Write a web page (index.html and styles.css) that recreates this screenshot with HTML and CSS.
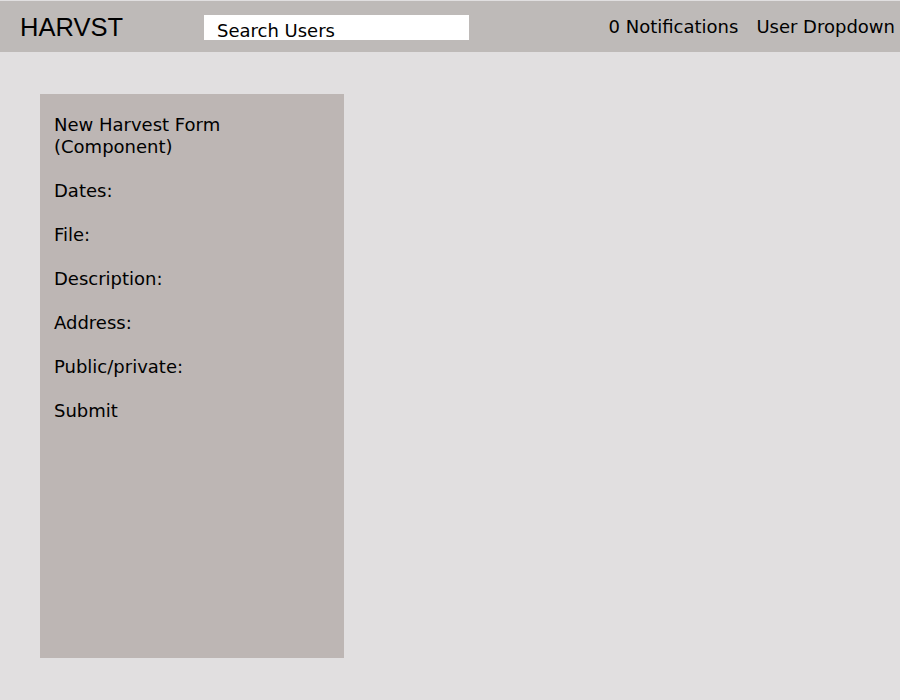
FILE: index.html
```html
<!DOCTYPE html>
<html>
<head>
<meta charset="utf-8">
<link rel="stylesheet" href="styles.css">
</head>
<body>
<header class="topbar">
  <div class="logo">HARVST</div>
  <div class="search">Search Users</div>
  <nav class="nav">
    <span class="nav-item">0 Notifications</span>
    <span class="nav-item">User Dropdown</span>
  </nav>
</header>
<main class="content">
  <section class="form-panel">
    <p class="form-line">New Harvest Form<br>(Component)</p>
    <p class="form-line">Dates:</p>
    <p class="form-line">File:</p>
    <p class="form-line">Description:</p>
    <p class="form-line">Address:</p>
    <p class="form-line">Public/private:</p>
    <p class="form-line">Submit</p>
  </section>
</main>
</body>
</html>
```

FILE: styles.css
```css
html, body {
  margin: 0;
  padding: 0;
  background: #e1dfe0;
  height: 100%;
}
body {
  font-family: "DejaVu Sans", Verdana, sans-serif;
  font-size: 18px;
  color: #000;
}
.topbar {
  margin-top: 1px;
  height: 51px;
  background: #bebab8;
  display: flex;
  align-items: center;
}
.logo {
  font-family: "Liberation Sans", Arial, sans-serif;
  font-size: 25.5px;
  width: 204px;
  padding-left: 20px;
  box-sizing: border-box;
  line-height: 30px;
}
.search {
  width: 265px;
  height: 25px;
  background: #fff;
  box-sizing: border-box;
  padding-left: 13px;
  padding-top: 5px;
  line-height: 21px;
  margin-top: 2px;
}
.nav {
  margin-left: auto;
  display: flex;
  gap: 18px;
  padding-right: 5px;
}
.content {
  padding: 42px 0 0 40px;
}
.form-panel {
  width: 304px;
  height: 564px;
  background: #bdb6b4;
  box-sizing: border-box;
  padding: 20px 14px;
}
.form-line {
  margin: 0 0 22px 0;
  line-height: 22px;
}
```
